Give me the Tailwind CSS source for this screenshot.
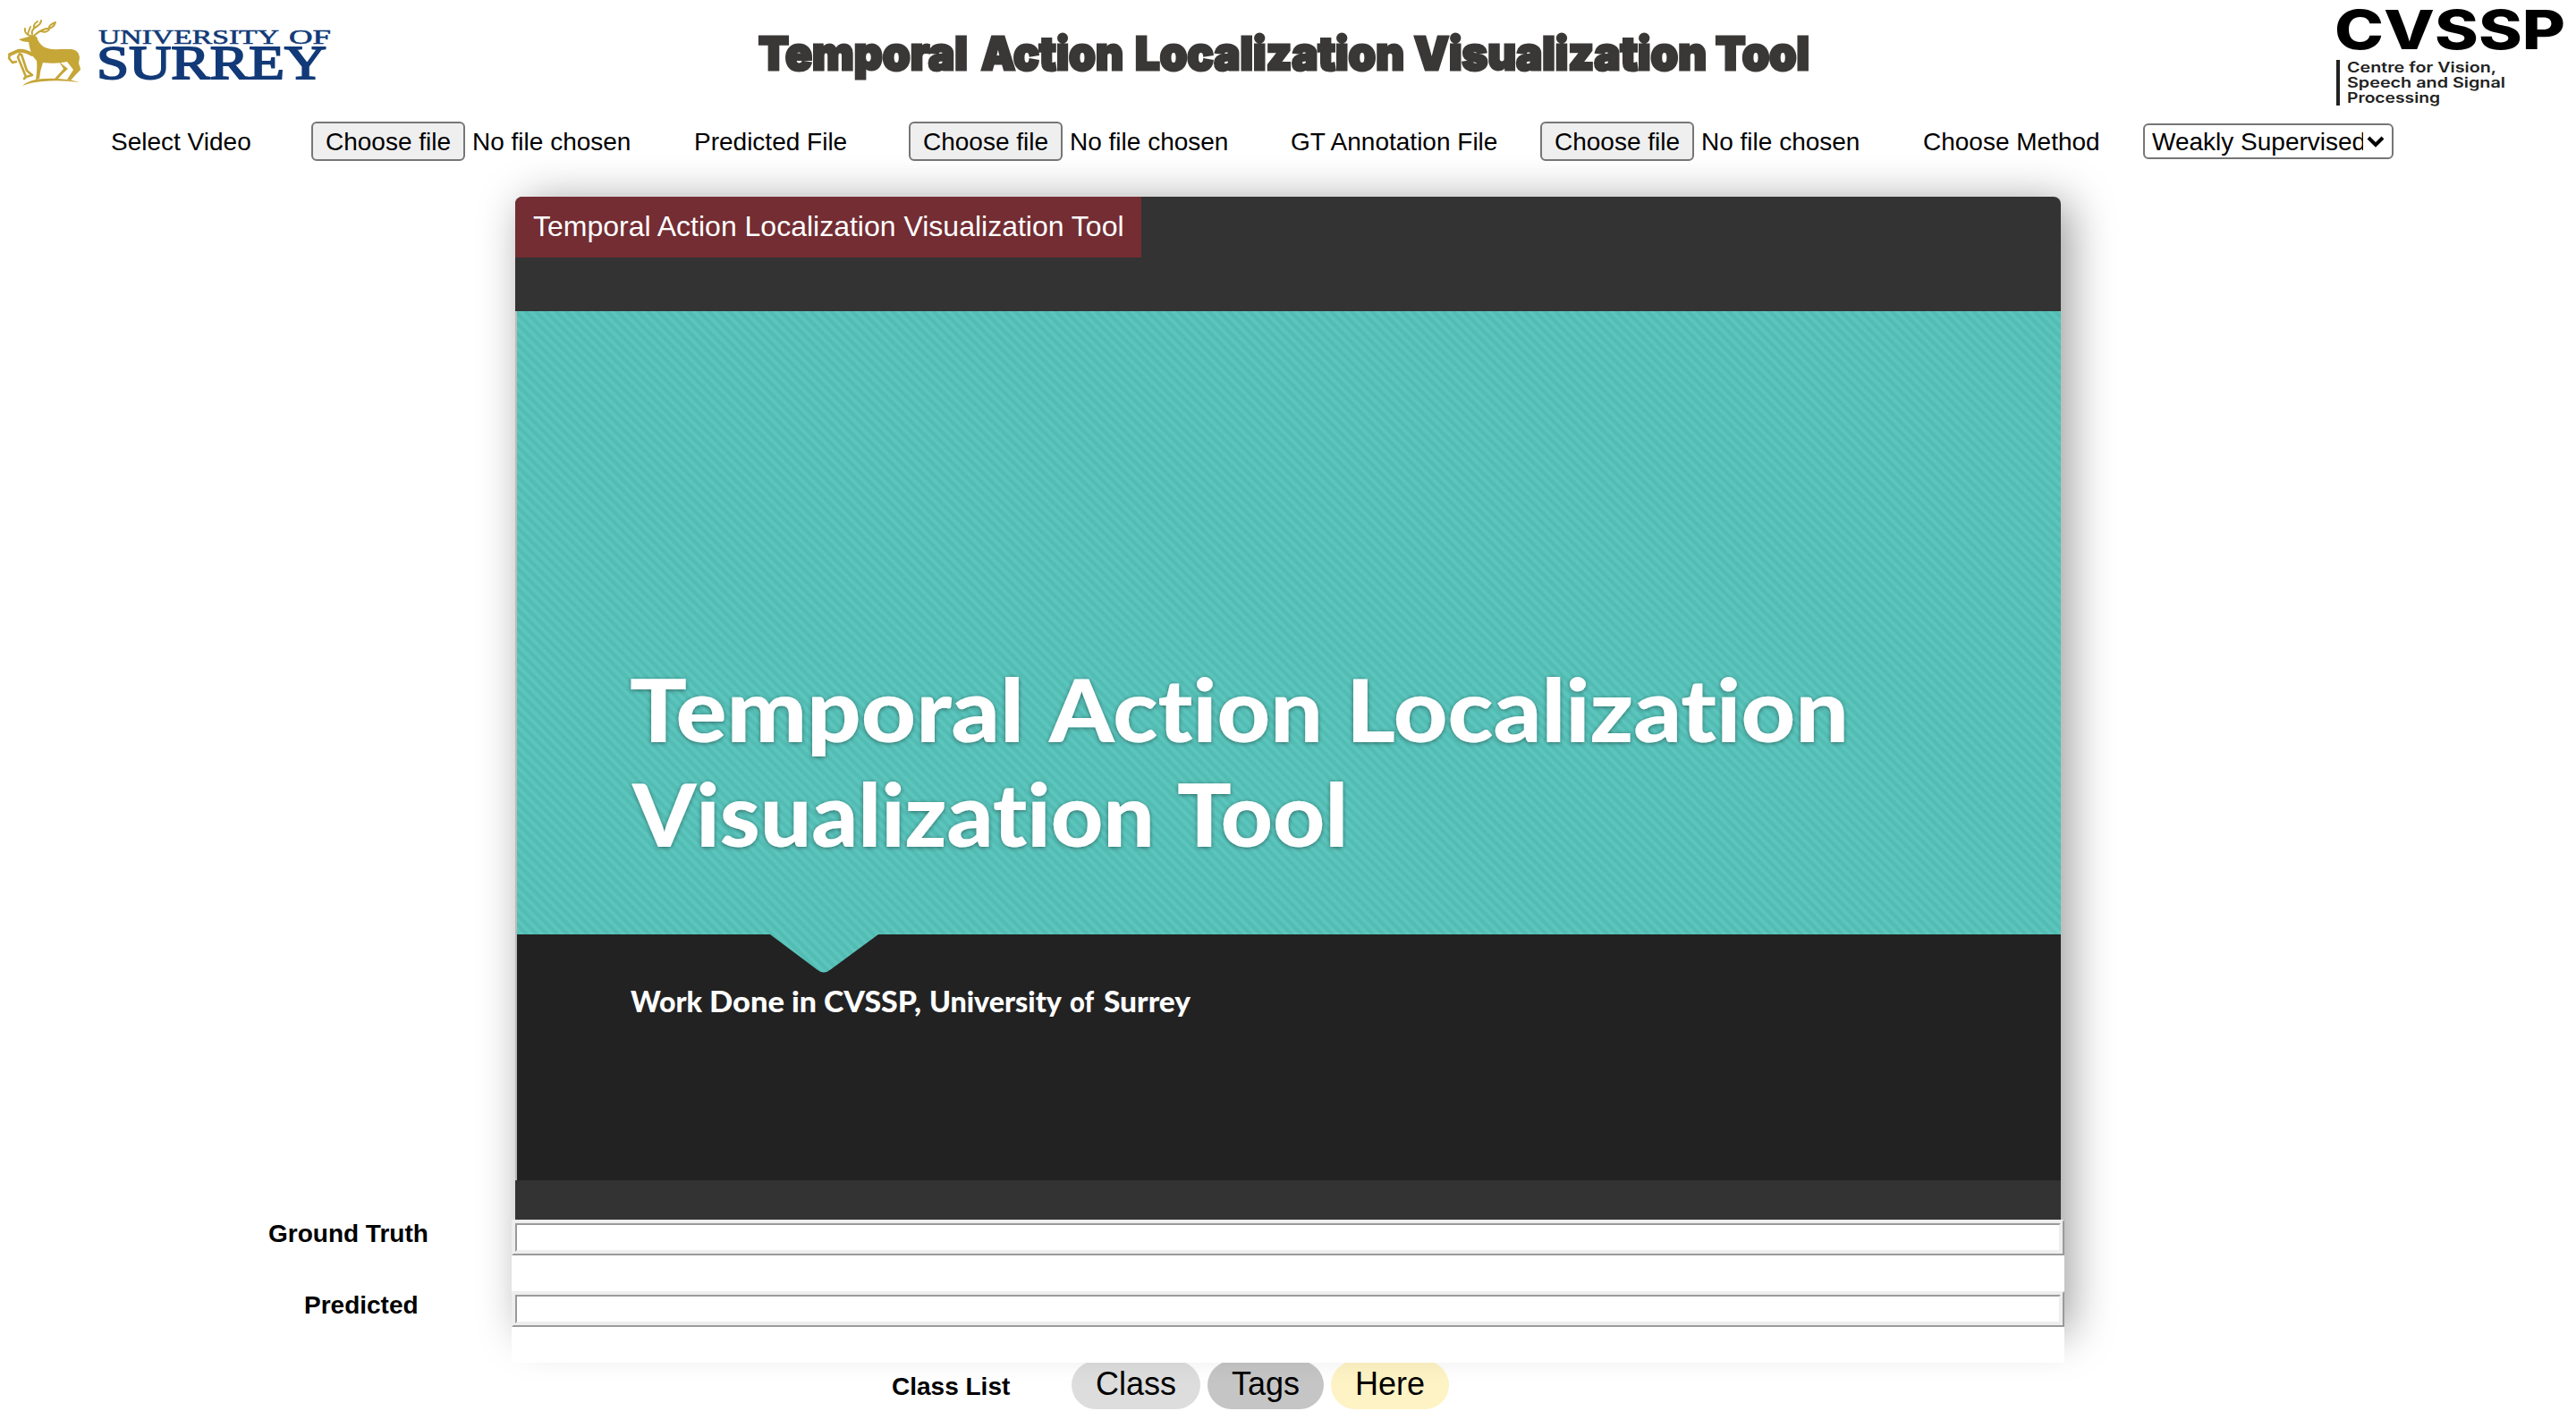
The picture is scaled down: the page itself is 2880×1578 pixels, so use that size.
<!DOCTYPE html>
<html lang="en">
<head>
<meta charset="utf-8">
<title>Temporal Action Localization Visualization Tool</title>
<script src="https://cdn.jsdelivr.net/npm/@tailwindcss/browser@4"></script>
</head>
<body class="w-[2880px] h-[1578px] overflow-hidden bg-white text-black font-['Liberation_Sans',Arial,sans-serif]">
<header class="flex h-[136px]">
  <!-- University logo -->
  <svg class="w-[400px] h-[120px]" viewBox="0 0 400 120">
    <g fill="#c5a637">
      <path d="M21 44L32 41Q35 38 41 41Q43 49 50 53Q58 56 66 55L80 55Q88 56 89 64L88 71Q90 76 90 78Q84 84 79 90L75 89L82 78L75 69Q63 72 48 70Q45 78 44 88L40 89Q42 76 41 68Q34 62 32 47Q25 47 21 44Z"/>
      <path d="M25 96Q34 88 50 88Q70 87 89 92Q66 89 48 91Q34 92 25 96Z"/>
      <path d="M66 69L76 77Q70 82 65 88L61 88L71 77Z"/>
    </g>
    <g fill="none" stroke="#c5a637" stroke-linecap="round" stroke-linejoin="round">
      <path stroke-width="4" d="M36 61Q27 56 20 57L11 61"/>
      <path stroke-width="2.6" d="M11 61L10 65L14 70L18 69M22 60L20 64L25 76L29 86L36 84L30 79L24 61M29 86L27 88"/>
      <path stroke-width="2" d="M34 40Q27 38 28 32M31 38L34 30M36 39Q34 33 42 29Q46 26 46 23M38 31Q37 27 42 24M38 40Q44 34 52 32Q60 32 62 25M46 35Q52 37 55 33M55 32Q54 28 62 25"/>
    </g>
    <g fill="#123a78" stroke="#123a78" font-family="Liberation Serif, serif">
      <text x="110" y="48.5" font-size="24" stroke-width=".6" textLength="202" lengthAdjust="spacingAndGlyphs">UNIVERSITY</text>
      <text x="323" y="48.5" font-size="24" stroke-width=".6" textLength="47" lengthAdjust="spacingAndGlyphs">OF</text>
      <text x="108" y="88" font-size="53" stroke-width="1.8" textLength="257" lengthAdjust="spacingAndGlyphs">SURREY</text>
    </g>
  </svg>
  <h1 class="ml-[420px] w-[1240px] h-[120px]">
    <svg class="block size-full" viewBox="820 0 1240 120" fill="#3a3737" stroke="#3a3737" stroke-width="3" font-family="Inter, sans-serif" font-weight="900" font-size="51">
      <text x="848" y="78" textLength="234" lengthAdjust="spacingAndGlyphs">Temporal</text>
      <text x="1097" y="78" textLength="159" lengthAdjust="spacingAndGlyphs">Action</text>
      <text x="1269" y="78" textLength="301" lengthAdjust="spacingAndGlyphs">Localization</text>
      <text x="1581" y="78" textLength="327" lengthAdjust="spacingAndGlyphs">Visualization</text>
      <text x="1918" y="78" textLength="105" lengthAdjust="spacingAndGlyphs">Tool</text>
    </svg>
  </h1>
  <!-- Research centre logo -->
  <svg class="ml-auto w-[320px] h-[130px]" viewBox="0 0 320 130" font-family="Inter, sans-serif">
    <text x="50" y="54.500" font-size="60" font-weight="800" textLength="258" lengthAdjust="spacingAndGlyphs">CVSSP</text>
    <path fill="#222" d="M52 67h4v51h-4z"/>
    <g font-size="16" font-weight="600" fill="#222">
      <text x="64" y="81" textLength="167" lengthAdjust="spacingAndGlyphs">Centre for Vision,</text>
      <text x="64" y="98" textLength="177" lengthAdjust="spacingAndGlyphs">Speech and Signal</text>
      <text x="64" y="115" textLength="104" lengthAdjust="spacingAndGlyphs">Processing</text>
    </g>
  </svg>
</header>

<nav class="flex h-11 items-center text-[28px] leading-8 whitespace-nowrap">
  <div class="flex shrink-0 items-center w-[776px] pl-[124px]">
    <label class="w-[224px] pt-0.5">Select Video</label>
    <button class="w-[172px] h-11 rounded-md border-2 border-[#767676] bg-[#efefef] pt-0.5">Choose file</button>
    <span class="ml-2 pt-0.5">No file chosen</span>
  </div>
  <div class="flex shrink-0 items-center w-[667px]">
    <label class="w-[240px] pt-0.5">Predicted File</label>
    <button class="w-[172px] h-11 rounded-md border-2 border-[#767676] bg-[#efefef] pt-0.5">Choose file</button>
    <span class="ml-2 pt-0.5">No file chosen</span>
  </div>
  <div class="flex shrink-0 items-center w-[707px]">
    <label class="w-[279px] pt-0.5">GT Annotation File</label>
    <button class="w-[172px] h-11 rounded-md border-2 border-[#767676] bg-[#efefef] pt-0.5">Choose file</button>
    <span class="ml-2 pt-0.5">No file chosen</span>
  </div>
  <div class="flex shrink-0 items-center">
    <label class="w-[246px] pt-0.5">Choose Method</label>
    <div class="flex h-10 w-[280px] items-center rounded-md border-2 border-[#767676] bg-white pl-2">
      <span class="w-[236px] overflow-hidden pt-0.5">Weakly Supervised</span>
      <svg class="ml-1 size-5" viewBox="0 0 20 20" fill="none" stroke="#000" stroke-width="4"><path d="M2 6L10 14L18 6"/></svg>
    </div>
  </div>
</nav>

<main class="mt-10 flex h-[1304px]">
  <div class="w-[572px] pt-[1144px] text-[28px] leading-8 font-bold">
    <div class="ml-[300px] h-20">Ground Truth</div>
    <div class="ml-[340px]">Predicted</div>
  </div>
  <div class="relative w-[1736px]">
    <div class="absolute left-1 top-0 h-[1266px] w-[1728px] rounded-lg shadow-[10px_6px_50px_rgba(0,0,0,0.4)]"></div>
    <div class="relative mx-1 h-[1144px] overflow-hidden rounded-t-lg bg-[#333]">
      <div class="h-[128px]">
        <div class="h-[68px] w-[700px] bg-[#732d33] pl-5 pt-[15px] text-[32px] leading-9 whitespace-nowrap text-white">Temporal Action Localization Visualization Tool</div>
      </div>
      <svg class="block h-[972px] w-[1728px]" viewBox="576 348 1728 972">
        <defs>
          <pattern id="hatch" width="11.4" height="11.4" patternUnits="userSpaceOnUse">
            <path fill="#5cc6be" d="M0 0h11.4v11.4H0z"/>
            <path stroke="#56c0b7" stroke-width="5" d="M-3 -3L15 15M-3 8.400L4 15.400M8.400 -3L15.400 4"/>
            <path stroke="#52bcb3" stroke-width="2.6" d="M-3 -3L15 15M-3 8.400L4 15.400M8.400 -3L15.400 4"/>
          </pattern>
          <filter id="soft" x="-5%" y="-20%" width="110%" height="140%"><feDropShadow dx="0" dy="1" stdDeviation="2.5" flood-color="#000" flood-opacity=".45"/></filter>
        </defs>
        <path fill="#bbb" d="M576 348h2v972h-2z"/>
        <path fill="#222" d="M578 348h1726v972H578z"/>
        <path fill="url(#hatch)" d="M578 348H2304V1045H982L929 1084Q921 1091 913 1084L861 1045H578z"/>
        <g class="[font-variant-ligatures:none]" fill="#fff" font-family="Lato, sans-serif" font-weight="900" filter="url(#soft)" font-size="97">
          <text x="704" y="830" textLength="441" lengthAdjust="spacingAndGlyphs">Temporal</text>
          <text x="1173" y="830" textLength="306" lengthAdjust="spacingAndGlyphs">Action</text>
          <text x="1505" y="830" textLength="562" lengthAdjust="spacingAndGlyphs">Localization</text>
          <text x="707" y="946.500" textLength="584" lengthAdjust="spacingAndGlyphs">Visualization</text>
          <text x="1316" y="946.500" textLength="191" lengthAdjust="spacingAndGlyphs">Tool</text>
        </g>
        <g class="[font-variant-ligatures:none]" fill="#fff" font-family="Lato, sans-serif" font-weight="900" font-size="33">
          <text x="705" y="1132" textLength="80" lengthAdjust="spacingAndGlyphs">Work</text>
          <text x="793" y="1132" textLength="84" lengthAdjust="spacingAndGlyphs">Done</text>
          <text x="885" y="1132" textLength="28" lengthAdjust="spacingAndGlyphs">in</text>
          <text x="921" y="1132" textLength="109" lengthAdjust="spacingAndGlyphs">CVSSP,</text>
          <text x="1039" y="1132" textLength="148" lengthAdjust="spacingAndGlyphs">University</text>
          <text x="1196" y="1132" textLength="27" lengthAdjust="spacingAndGlyphs">of</text>
          <text x="1234" y="1132" textLength="97" lengthAdjust="spacingAndGlyphs">Surrey</text>
        </g>
      </svg>
    </div>
    <div class="relative flex h-[160px] flex-col gap-10 bg-white">
      <div class="h-10 border-2 border-t-[#eee] border-l-[#eee] border-r-[#9a9a9a] border-b-[#9a9a9a] bg-[#eee] p-0.5">
        <div class="h-full border-2 border-t-[#9a9a9a] border-l-[#9a9a9a] border-r-[#eee] border-b-[#eee] bg-white"></div>
      </div>
      <div class="h-10 border-2 border-t-[#eee] border-l-[#eee] border-r-[#9a9a9a] border-b-[#9a9a9a] bg-[#eee] p-0.5">
        <div class="h-full border-2 border-t-[#9a9a9a] border-l-[#9a9a9a] border-r-[#eee] border-b-[#eee] bg-white"></div>
      </div>
    </div>
  </div>
</main>

<footer class="flex h-[52px] items-end overflow-hidden pl-[997px]">
  <div class="w-[201px] pb-[9px] text-[28px] leading-8 font-bold">Class List</div>
  <div class="flex gap-2 text-[36px] leading-[52px]">
    <span class="h-[54px] w-[144px] rounded-full bg-[#ddd] text-center">Class</span>
    <span class="h-[54px] w-[130px] rounded-full bg-[#c5c5c5] text-center">Tags</span>
    <span class="h-[54px] w-[132px] rounded-full bg-[#fdf3c4] text-center">Here</span>
  </div>
</footer>
</body>
</html>
